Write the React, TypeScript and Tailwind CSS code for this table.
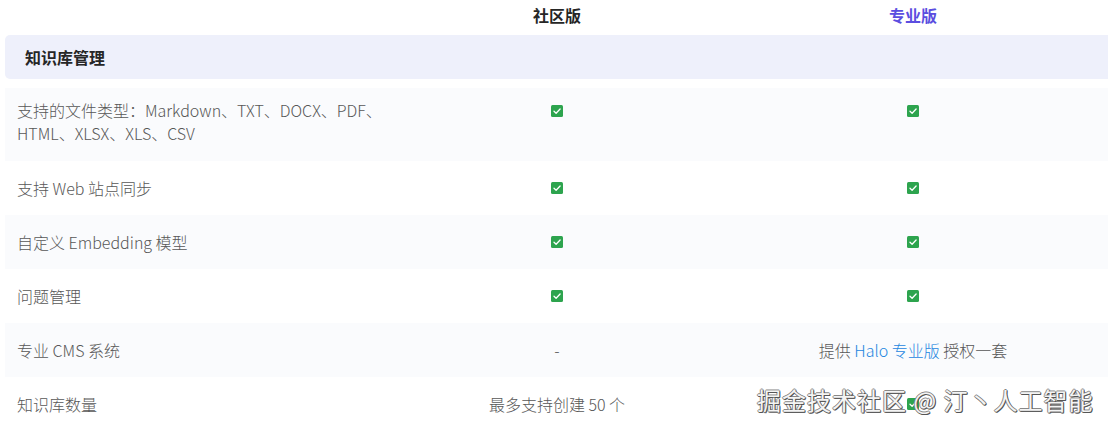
import React from "react";

const Check = () => (
  <svg width="12" height="12" viewBox="0 0 12 12" className="block">
    <rect x="0" y="0" width="12" height="12" rx="1.5" fill="#2da44e" />
    <path d="M3 6.2 L5.1 8.2 L9.1 4" stroke="#fff" strokeWidth="1.3" fill="none" strokeLinecap="round" strokeLinejoin="round" />
  </svg>
);

type Row = { label: React.ReactNode; community: React.ReactNode; pro: React.ReactNode; tall?: boolean };

const rows: Row[] = [
  {
    label: (
      <>
        支持的文件类型：Markdown、TXT、DOCX、PDF、
        <br />
        HTML、XLSX、XLS、CSV
      </>
    ),
    community: <Check />,
    pro: <Check />,
    tall: true,
  },
  { label: "支持 Web 站点同步", community: <Check />, pro: <Check /> },
  { label: "自定义 Embedding 模型", community: <Check />, pro: <Check /> },
  { label: "问题管理", community: <Check />, pro: <Check /> },
  {
    label: "专业 CMS 系统",
    community: "-",
    pro: (
      <span>
        提供 <span className="text-[#1d86e0]">Halo 专业版</span> 授权一套
      </span>
    ),
  },
  { label: "知识库数量", community: "最多支持创建 50 个", pro: <Check /> },
];

export default function App() {
  return (
    <div
      className="relative w-[1108px] h-[429px] overflow-hidden bg-white text-[16px] text-[#575757]"
      style={{ fontFamily: '"Noto Sans CJK SC", "Noto Sans", sans-serif' }}
    >
      <div className="grid grid-cols-[379px_356px_356px_1fr] h-[35px] items-center">
        <div />
        <div className="text-center font-bold text-[#262626] pb-[6px]">社区版</div>
        <div className="text-center font-bold text-[#5b4ee0] pb-[6px]">专业版</div>
        <div />
      </div>

      <div className="ml-[5px] h-[44px] flex items-center pl-[20px] bg-[#eef0fb] rounded-l-[5px] font-bold text-[#262626]">
        知识库管理
      </div>

      <div className="ml-[5px] mt-[9px] font-light">
        {rows.map((r, i) => (
          <div
            key={i}
            className={`grid grid-cols-[374px_356px_356px_1fr] ${
              r.tall ? "h-[73px] items-start pt-[11px]" : "h-[54px] items-center"
            } ${i % 2 === 0 ? "bg-[#fafbfd]" : "bg-white"}`}
          >
            <div className="pl-[12px] leading-[23px] whitespace-nowrap">{r.label}</div>
            <div className={`flex justify-center ${r.tall ? "pt-[6px]" : ""}`}>{r.community}</div>
            <div className={`flex justify-center ${r.tall ? "pt-[6px]" : ""}`}>{r.pro}</div>
            <div />
          </div>
        ))}
      </div>

      <div
        className="absolute left-[757px] top-[384px] text-[24px] leading-[32px] tracking-[1px] text-[#f4f4f4] whitespace-nowrap"
        style={{
          textShadow:
            "1px 1px 0 #555, -1px 0 0 #888, 0 -1px 0 #888, 1px 0 0 #666, 0 1px 0 #666",
        }}
      >
        掘金技术社区 @ 汀丶人工智能
      </div>
    </div>
  );
}
